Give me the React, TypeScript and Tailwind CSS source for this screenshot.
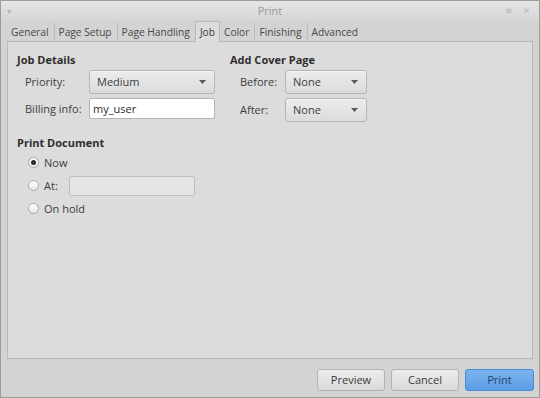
import React from "react";

const tabs = ["General", "Page Setup", "Page Handling", "Job", "Color", "Finishing", "Advanced"];

function Combo({ value, width }: { value: string; width: string }) {
  return (
    <div
      className={`${width} h-[24px] flex items-center justify-between pl-[7px] pr-[8px] rounded-[3px] border border-[#b4b4b4] bg-gradient-to-b from-[#ececec] to-[#dcdcdc] shadow-[inset_0_1px_0_#f6f6f6]`}
    >
      <span>{value}</span>
      <svg width="7" height="4" viewBox="0 0 7 4">
        <path d="M0 0h7L3.5 4z" fill="#5a5a5a" />
      </svg>
    </div>
  );
}

function Radio({ checked, label }: { checked?: boolean; label: string }) {
  return (
    <div className="flex items-center gap-[5px]">
      <div className="w-[11px] h-[11px] rounded-full border border-[#a8a8a8] bg-gradient-to-b from-white to-[#e8e8e8] flex items-center justify-center">
        {checked && <div className="w-[5px] h-[5px] rounded-full bg-[#2b2b2b]" />}
      </div>
      <span>{label}</span>
    </div>
  );
}

function Button({ label, primary }: { label: string; primary?: boolean }) {
  return (
    <div
      className={
        primary
          ? "w-[69px] h-[22px] flex items-center justify-center rounded-[3px] border border-[#4a8ad6] bg-gradient-to-b from-[#7cb4ee] to-[#5c9ce6] text-[#23466e]"
          : "w-[68px] h-[22px] flex items-center justify-center rounded-[3px] border border-[#b2b2b2] bg-gradient-to-b from-[#ececec] to-[#dadada] text-[#3a3a3a]"
      }
    >
      {label}
    </div>
  );
}

export default function App() {
  return (
    <div
      className="w-[540px] h-[398px] bg-[#d3d3d3] text-[#3c3c3c] text-[11px] leading-[16px] flex flex-col overflow-hidden border border-[#9c9c9c]"
      style={{ fontFamily: '"Open Sans", "DejaVu Sans", sans-serif' }}
    >
      {/* Title bar */}
      <div className="h-[19px] shrink-0 flex items-center px-[6px] bg-gradient-to-b from-[#e6e6e6] to-[#d6d6d6]">
        <div className="w-[40px] text-[#b0b0b0] text-[8px]">▾</div>
        <div className="flex-1 text-center text-[#9a9a9a]">Print</div>
        <div className="w-[40px] flex justify-end gap-[10px] text-[#b8b8b8] text-[9px] pr-[3px]">
          <span>✲</span>
          <span>✕</span>
        </div>
      </div>

      {/* Tabs */}
      <div className="flex items-end h-[21px] px-[6px] shrink-0 text-[10.2px]">
        {tabs.map((t, i) => {
          const active = t === "Job";
          const prevActive = tabs[i - 1] === "Job";
          return (
            <div
              key={t}
              className={
                active
                  ? "h-[21px] px-[4px] flex items-center bg-[#dcdcdc] border border-b-0 border-[#b8b8b8] rounded-t-[2px] -mb-[1px] z-10"
                  : `h-[18px] px-[4px] flex items-center text-[#484848] ${i > 0 && !prevActive ? "border-l border-[#bcbcbc]" : ""} mr-[1px]`
              }
            >
              {t}
            </div>
          );
        })}
      </div>

      {/* Notebook panel */}
      <div className="mx-[6px] h-[318px] bg-[#dcdcdc] border border-[#b8b8b8] px-[9px] pt-[10px]">
        <div className="flex">
          <div className="w-[213px]">
            <div className="font-bold text-[#2e2e2e] mb-[2px]">Job Details</div>
            <div className="flex items-center ml-[8px] mb-[4px]">
              <span className="w-[64px]">Priority:</span>
              <Combo value="Medium" width="w-[126px]" />
            </div>
            <div className="flex items-center ml-[8px]">
              <span className="w-[64px]">Billing info:</span>
              <div className="w-[126px] h-[21px] flex items-center px-[3px] bg-white border border-[#b4b4b4] rounded-[2px] text-[#2a2a2a]">
                my_user
              </div>
            </div>
          </div>
          <div>
            <div className="font-bold text-[#2e2e2e] mb-[2px]">Add Cover Page</div>
            <div className="flex items-center ml-[10px] mb-[4px]">
              <span className="w-[45px]">Before:</span>
              <Combo value="None" width="w-[82px]" />
            </div>
            <div className="flex items-center ml-[10px]">
              <span className="w-[45px]">After:</span>
              <Combo value="None" width="w-[82px]" />
            </div>
          </div>
        </div>

        <div className="mt-[13px]">
          <div className="font-bold text-[#2e2e2e]">Print Document</div>
          <div className="ml-[11px] flex flex-col">
            <div className="h-[23px] flex items-center">
              <Radio checked label="Now" />
            </div>
            <div className="h-[23px] flex items-center">
              <Radio label="At:" />
              <div className="ml-[11px] w-[126px] h-[20px] bg-[#e4e4e4] border border-[#c0c0c0] rounded-[2px]" />
            </div>
            <div className="h-[23px] flex items-center">
              <Radio label="On hold" />
            </div>
          </div>
        </div>
      </div>

      {/* Buttons */}
      <div className="flex justify-end gap-[6px] pr-[5px] mt-[10px]">
        <Button label="Preview" />
        <Button label="Cancel" />
        <Button label="Print" primary />
      </div>
    </div>
  );
}
